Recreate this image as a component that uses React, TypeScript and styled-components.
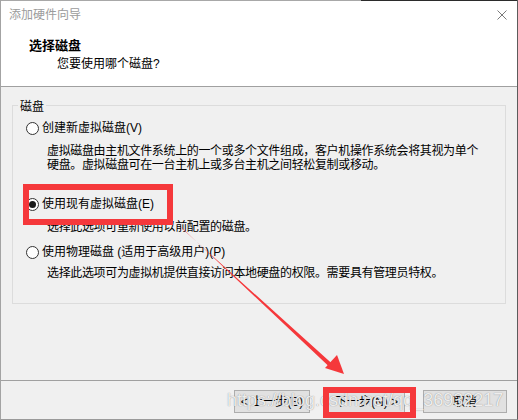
import React from 'react';
import styled, { createGlobalStyle } from 'styled-components';

const GlobalStyle = createGlobalStyle`
  html, body {
    margin: 0;
    padding: 0;
    background: #f0f0f0;
  }
  body {
    font-family: 'Liberation Sans', 'Noto Sans CJK SC', sans-serif;
    font-size: 12px;
    color: #000;
  }
`;

const Window = styled.div`
  position: relative;
  width: 518px;
  height: 420px;
  box-sizing: border-box;
  display: flex;
  flex-direction: column;
  background: #f0f0f0;
  border-left: 1px solid #a3a3a3;
  border-right: 1px solid #5c5c5c;
  border-bottom: 1px solid #9a9a9a;
  overflow: hidden;
`;

const TitleBar = styled.div`
  height: 30px;
  flex: none;
  display: flex;
  align-items: center;
  justify-content: space-between;
  padding: 0 9px 0 8px;
  background:
    linear-gradient(to right, #a8a8a8 360px, #2b2b2b 360px) top / 100% 1px no-repeat,
    #fff;
`;

const TitleText = styled.span`
  color: #9b9b9b;
  font-size: 12px;
  line-height: 14px;
`;

const CloseIcon = styled.svg`
  width: 10px;
  height: 10px;
  margin-right: 1px;
`;

const Header = styled.div`
  height: 57px;
  flex: none;
  background: #fff;
  border-bottom: 1px solid #a0a0a0;
  padding: 8px 0 0 28px;
  box-sizing: border-box;
`;

const HeaderTitle = styled.div`
  font-weight: 700;
  font-size: 13px;
  line-height: 16px;
`;

const HeaderSub = styled.div`
  margin: 3px 0 0 28px;
  line-height: 14px;
`;

const Body = styled.div`
  flex: 1;
  padding: 10px 11px 0 11px;
`;

const GroupBox = styled.fieldset`
  margin: 0;
  padding: 0;
  height: 207px;
  box-sizing: border-box;
  border: 1px solid #dcdcdc;
  min-inline-size: 0;
`;

const Legend = styled.legend`
  padding: 4px 2px 0 2px;
  margin-left: 5px;
  line-height: 12px;
`;

const Option = styled.div<{ $gap: number }>`
  margin-top: ${(p) => p.$gap}px;
`;

const RadioRow = styled.div`
  display: flex;
  align-items: center;
  height: 14px;
  line-height: 14px;
  padding-left: 13px;
`;

const Radio = styled.span<{ $checked?: boolean }>`
  width: 13px;
  height: 13px;
  box-sizing: border-box;
  border: 1px solid #333;
  border-radius: 50%;
  background: #fff;
  margin-right: 3px;
  display: flex;
  align-items: center;
  justify-content: center;

  &::after {
    content: '';
    display: ${(p) => (p.$checked ? 'block' : 'none')};
    width: 7px;
    height: 7px;
    border-radius: 50%;
    background: #1a1a1a;
  }
`;

const Desc = styled.div<{ $gap: number }>`
  margin: ${(p) => p.$gap}px 0 0 34px;
  line-height: 14px;
  letter-spacing: -0.35px;
  width: 436px;
`;

const Footer = styled.div`
  height: 39px;
  flex: none;
  border-top: 1px solid #a0a0a0;
  box-sizing: border-box;
  display: flex;
  align-items: flex-start;
  justify-content: flex-end;
  padding: 9px 10px 0 0;
  gap: 18px;
`;

const Button = styled.button<{ $w: number }>`
  width: ${(p) => p.$w}px;
  height: 23px;
  margin: 0;
  padding: 0;
  border: 1px solid #adadad;
  background: #e1e1e1;
  font-family: 'Liberation Sans', 'Noto Sans CJK SC', sans-serif;
  font-size: 12px;
  line-height: 14px;
  color: #000;
`;

const Watermark = styled.div`
  position: absolute;
  left: 226px;
  top: 389px;
  font-family: 'Liberation Sans', sans-serif;
  font-size: 18px;
  line-height: 22px;
  color: rgba(255, 255, 255, 0.85);
  text-shadow: 0 0 1px rgba(100, 100, 100, 0.8);
  white-space: nowrap;
  pointer-events: none;
`;

const Overlay = styled.svg`
  position: absolute;
  left: 0;
  top: 0;
  width: 518px;
  height: 420px;
  pointer-events: none;
`;

const red = '#f5383b';

export default function App() {
  return (
    <>
      <GlobalStyle />
      <Window>
        <TitleBar>
          <TitleText>添加硬件向导</TitleText>
          <CloseIcon viewBox="0 0 10 10">
            <path d="M0.5 0.5 L9.5 9.5 M9.5 0.5 L0.5 9.5" stroke="#7a7a7a" strokeWidth="1" />
          </CloseIcon>
        </TitleBar>
        <Header>
          <HeaderTitle>选择磁盘</HeaderTitle>
          <HeaderSub>您要使用哪个磁盘?</HeaderSub>
        </Header>
        <Body>
          <GroupBox>
            <Legend>磁盘</Legend>
            <Option $gap={8}>
              <RadioRow>
                <Radio />
                创建新虚拟磁盘(V)
              </RadioRow>
              <Desc $gap={9}>
                虚拟磁盘由主机文件系统上的一个或多个文件组成，客户机操作系统会将其视为单个硬盘。虚拟磁盘可在一台主机上或多台主机之间轻松复制或移动。
              </Desc>
            </Option>
            <Option $gap={25}>
              <RadioRow>
                <Radio $checked />
                使用现有虚拟磁盘(E)
              </RadioRow>
              <Desc $gap={9}>选择此选项可重新使用以前配置的磁盘。</Desc>
            </Option>
            <Option $gap={11}>
              <RadioRow>
                <Radio />
                使用物理磁盘 (适用于高级用户)(P)
              </RadioRow>
              <Desc $gap={7}>选择此选项可为虚拟机提供直接访问本地硬盘的权限。需要具有管理员特权。</Desc>
            </Option>
          </GroupBox>
        </Body>
        <Footer>
          <Button $w={76}>&lt; 上一步(B)</Button>
          <Button $w={77}>下一步(N) &gt;</Button>
          <Button $w={84}>取消</Button>
        </Footer>
        <Watermark>https://blog.csdn.net/qq_36932217</Watermark>
        <Overlay viewBox="0 0 518 420">
          <rect x="25" y="187" width="144" height="35" fill="none" stroke={red} strokeWidth="6" />
          <rect x="325" y="390" width="87" height="25" fill="none" stroke={red} strokeWidth="6" />
          <polygon points="180,227 181.5,229 332,364.5 328,366.5" fill={red} />
          <polygon points="343,374 324,368 336,355" fill={red} />
        </Overlay>
      </Window>
    </>
  );
}
